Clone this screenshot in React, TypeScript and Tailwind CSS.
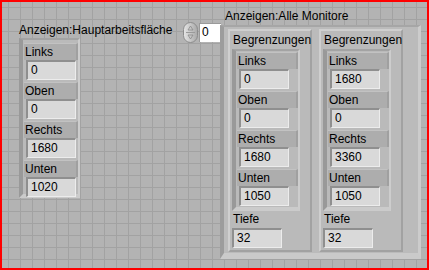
import React from "react";

const font = "font-['Segoe_UI','Liberation_Sans',sans-serif] text-[12px] text-black";

interface FieldProps {
  label: string;
  value: string;
}

// numeric indicator with its label strip, as it sits inside a cluster
const Field: React.FC<FieldProps> = ({ label, value }) => (
  <div className="flex flex-col">
    <div className="h-[17px] leading-[16px] pl-[1px] bg-[#adadad] border-t border-[#c2c2c2] border-r-2 border-r-[#a0a0a0]">
      {label}
    </div>
    <div className="h-[21px] flex items-end pb-[1px] pl-[2px]">
      <div className="h-[20px] w-[50px] leading-[17px] pl-[3px] bg-[#d9d9d9] border-t-2 border-l-2 border-t-[#8f8f8f] border-l-[#8f8f8f] border-r border-b border-r-[#ececec] border-b-[#ececec]">
        {value}
      </div>
    </div>
  </div>
);

const Cluster: React.FC<{ children: React.ReactNode; className?: string }> = ({
  children,
  className,
}) => (
  <div
    className={`bg-[#bababa] border-l-[4px] border-t-2 border-r-2 border-b-[4px] border-l-[#999999] border-t-[#a3a3a3] border-r-[#cdcdcd] border-b-[#cbcbcb] ${className ?? ""}`}
  >
    {children}
  </div>
);

const Element: React.FC<{ vals: string[] }> = ({ vals }) => (
  <div className="w-[84px] h-[223px] bg-[#bababa] border-2 border-t-[#cfcfcf] border-l-[#cfcfcf] border-r-[#a2a2a2] border-b-[#a2a2a2] pl-[2px] pt-[1px] flex flex-col">
    <div className="leading-[16px] pl-[1px]">Begrenzungen</div>
    <Cluster className="w-[68px] mt-[1px] pl-[1px] pt-[1px] flex flex-col gap-[1px]">
      <Field label="Links" value={vals[0]} />
      <Field label="Oben" value={vals[1]} />
      <Field label="Rechts" value={vals[2]} />
      <Field label="Unten" value={vals[3]} />
    </Cluster>
    <div className="leading-[16px] pl-[1px]">Tiefe</div>
    <div className="mt-[1px] h-[20px] w-[50px] leading-[17px] pl-[3px] bg-[#d9d9d9] border-t-2 border-l-2 border-t-[#8f8f8f] border-l-[#8f8f8f] border-r border-b border-r-[#ececec] border-b-[#ececec]">
      {vals[4]}
    </div>
  </div>
);

export default function App() {
  return (
    <div
      className={`${font} relative w-[429px] h-[270px] border-2 border-[#ff0000] bg-[#b3b3b3] bg-[linear-gradient(to_right,#a2a2a2_1px,transparent_1px),linear-gradient(to_bottom,#a2a2a2_1px,transparent_1px)] bg-size-[12px_12px] bg-position-[6px_5px] overflow-hidden`}
    >
      {/* Anzeigen:Hauptarbeitsfläche */}
      <div className="absolute left-[17px] top-[20px] leading-[16px]">
        Anzeigen:Hauptarbeitsfläche
      </div>
      <Cluster className="absolute left-[17px] top-[36px] w-[61px] h-[160px] pl-[1px] pt-[3px] flex flex-col gap-[1px]">
        <Field label="Links" value="0" />
        <Field label="Oben" value="0" />
        <Field label="Rechts" value="1680" />
        <Field label="Unten" value="1020" />
      </Cluster>

      {/* Anzeigen:Alle Monitore */}
      <div className="absolute left-[223px] top-[6px] leading-[16px]">
        Anzeigen:Alle Monitore
      </div>
      <div className="absolute left-[181px] top-[20px] flex items-center">
        <svg width="15" height="21" viewBox="0 0 15 21">
          <defs>
            <linearGradient id="sp" x1="0" x2="1">
              <stop offset="0" stopColor="#e6e6e6" />
              <stop offset="1" stopColor="#a8a8a8" />
            </linearGradient>
          </defs>
          <rect x="0.5" y="0.5" width="14" height="20" rx="7" fill="url(#sp)" stroke="#8c8c8c" />
          <line x1="3" y1="10.5" x2="12" y2="10.5" stroke="#9a9a9a" />
          <path d="M7.5 4 L10 8 L5 8 Z" fill="none" stroke="#8a8a8a" strokeWidth="0.8" />
          <path d="M7.5 17 L10 13 L5 13 Z" fill="none" stroke="#8a8a8a" strokeWidth="0.8" />
        </svg>
        <div className="ml-[1px] h-[19px] w-[22px] bg-white leading-[17px] pl-[2px] border-t border-l border-t-[#9a9a9a] border-l-[#9a9a9a]">
          0
        </div>
      </div>
      <div className="absolute left-[218px] top-[23px] w-[201px] h-[234px] bg-[#bbbbbb] border-l-[4px] border-t-[2px] border-r-[3px] border-b-[6px] border-l-[#9c9c9c] border-t-[#a6a6a6] border-r-[#cccccc] border-b-[#cacaca] pl-[4px] pt-[2px] flex gap-[7px]">
        <Element vals={["0", "0", "1680", "1050", "32"]} />
        <Element vals={["1680", "0", "3360", "1050", "32"]} />
      </div>
    </div>
  );
}
